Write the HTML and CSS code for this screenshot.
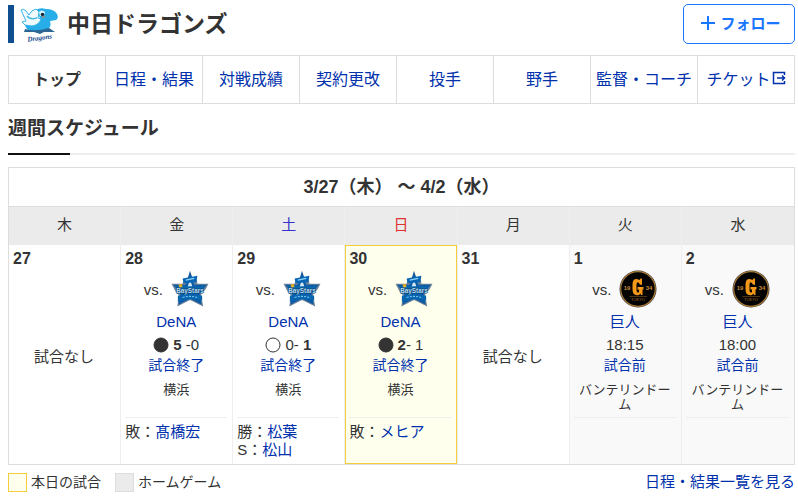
FILE: index.html
```html
<!DOCTYPE html>
<html lang="ja">
<head>
    <meta charset="UTF-8">
    <meta name="viewport" content="width=device-width, initial-scale=1.0">
    <title>中日ドラゴンズ</title>
    <link rel="stylesheet" href="styles.css">
</head>
<body>
    <!-- shared team logos -->
    <svg class="symbols" aria-hidden="true">
        <symbol id="baystars" viewBox="0 0 36 36">
            <path d="M18 0.5 L21 9 L24.5 9 L25 13 L35.5 13 L33 18 L28.5 22 L29 26 L30.5 34.5 L18 28.5 L6 34.5 L7.5 24 L4 20 L0.5 13 L11 13 L12 8.500 L15.500 8.500Z" fill="#70849a"/>
            <path d="M18 2 L22 14 L34 14 L27 22 L29 33 L18 27 L7 33 L9 22 L2 14 L14 14Z" fill="#0a5aa5"/>
            <path d="M18 9 L22 21 H14Z" fill="#d5eaf5"/>
            <path d="M11 8 L25 5.500 L24 11.500 L12 12.500Z" fill="#0866b5"/>
            <path d="M14 9.500 L22 8" stroke="#8ed5f5" stroke-width="1.200"/>
            <path d="M4 15.500 H32 L30 22 H6Z" fill="#0b67ae"/>
            <text x="18" y="21.500" class="logo-stars">BayStars</text>
            <path d="M6.500 24.500 Q18 21.500 29.500 24.500 V29 Q18 26 6.500 30Z" fill="#0866b0"/>
            <path d="M11 26 Q18 24 25 26" stroke="#77c5ed" stroke-width="1" fill="none" stroke-dasharray="2 1"/>
            <path d="M7 14 L10 13 L11 16 L8 16.500Z" fill="#e5ae24"/>
        </symbol>
        <symbol id="giants" viewBox="0 0 38 38">
            <circle cx="19" cy="19" r="18.500" fill="#30343a"/>
            <circle cx="19" cy="19" r="17.300" fill="#030303" stroke="#a77a38" stroke-width="1.200"/>
            <path d="M23 15 V8.500 H21.500 L20.500 10 Q14 7 13.500 14 V19 Q13.500 26.500 20 25 L21.500 23.500 L22 25 H23.500 V19.500 H24.500 V17 H18.500 V19.500 H20 V22 Q17.500 24 17.500 19 V14.500 Q18 10 21 14.500Z" fill="#f39818"/>
            <text x="8" y="20" class="logo-year">19</text>
            <text x="30" y="20" class="logo-year">34</text>
            <path d="M10.500 26.500 H28" stroke="#6b4b1d" stroke-width="0.700"/>
            <text x="19" y="31" class="logo-city">TOKYO</text>
        </symbol>
    </svg>

    <header class="team-header">
        <div class="team-title">
            <svg class="team-logo" viewBox="0 0 40 38" aria-hidden="true">
                <path d="M16 5 Q20 2 26 4 Q34 4 37 9 Q39 13 36 15 L30 16 Q32 22 27 25 L22 27 H12 Q6 25 5 20 L11 19 Q19 18 20 13Z" fill="#27aee8"/>
                <path d="M1 5 Q4 3 6 6 L9 10 Q11 5 16 4 L19 7 L18 13 L21 14 Q19 20 12 21 L5 20 L2 17 L6 16Z" fill="#effaff" stroke="#3cb4e7" stroke-width="1"/>
                <path d="M7 11 Q10 15 17 13" fill="none" stroke="#4ab9e6" stroke-width="1.500"/>
                <path d="M19 7 Q22 4 25 7 L24 11 H20Z" fill="#d8f5ff"/>
                <circle cx="22.500" cy="9.500" r="1.800" fill="#142b3d"/>
                <path d="M22 12 L25 12" stroke="#df7b3b"/>
                <path d="M5 24 Q15 27 29 23 L35 27 H24 L20 29 L14 27 H4Z" fill="#2d6692"/>
                <text x="20" y="35" class="logo-dragons" transform="rotate(-8 20 35)">Dragons</text>
            </svg>
            <h1>中日ドラゴンズ</h1>
        </div>
        <button type="button" class="follow-btn">
            <svg class="plus-icon" viewBox="0 0 14 14" aria-hidden="true"><path d="M7 0V14M0 7H14"/></svg>
            フォロー
        </button>
    </header>

    <nav class="tabs">
        <a href="#" class="active">トップ</a>
        <a href="#">日程・結果</a>
        <a href="#">対戦成績</a>
        <a href="#">契約更改</a>
        <a href="#">投手</a>
        <a href="#">野手</a>
        <a href="#">監督・コーチ</a>
        <a href="#">チケット<svg class="external-icon" viewBox="0 0 14 14" aria-hidden="true"><path d="M12.500 4V1.500H1.500V12.500H12.500V10M5 7H13M10 4.500L12.500 7L10 9.500"/></svg></a>
    </nav>

    <h2 class="section-title">週間スケジュール</h2>

    <table class="schedule">
        <thead>
            <tr>
                <th colspan="7" class="period">3/27（木） 〜 4/2（水）</th>
            </tr>
            <tr class="weekdays">
                <th>木</th>
                <th>金</th>
                <th class="sat">土</th>
                <th class="sun">日</th>
                <th>月</th>
                <th>火</th>
                <th>水</th>
            </tr>
        </thead>
        <tbody>
            <tr>
                <td>
                    <p class="date">27</p>
                    <p class="no-game">試合なし</p>
                </td>
                <td>
                    <p class="date">28</p>
                    <div class="versus">vs.<svg class="opponent-logo"><use href="#baystars"/></svg></div>
                    <a href="#" class="opponent">DeNA</a>
                    <p class="score"><svg class="mark lose" viewBox="0 0 16 16"><circle cx="8" cy="8" r="7"/></svg><span><b>5</b> -0</span></p>
                    <a href="#" class="status">試合終了</a>
                    <p class="stadium">横浜</p>
                    <div class="pitchers">
                        <p>敗：<a href="#">髙橋宏</a></p>
                    </div>
                </td>
                <td>
                    <p class="date">29</p>
                    <div class="versus">vs.<svg class="opponent-logo"><use href="#baystars"/></svg></div>
                    <a href="#" class="opponent">DeNA</a>
                    <p class="score"><svg class="mark" viewBox="0 0 16 16"><circle cx="8" cy="8" r="7"/></svg><span>0- <b>1</b></span></p>
                    <a href="#" class="status">試合終了</a>
                    <p class="stadium">横浜</p>
                    <div class="pitchers">
                        <p>勝：<a href="#">松葉</a></p>
                        <p>S：<a href="#">松山</a></p>
                    </div>
                </td>
                <td class="today">
                    <p class="date">30</p>
                    <div class="versus">vs.<svg class="opponent-logo"><use href="#baystars"/></svg></div>
                    <a href="#" class="opponent">DeNA</a>
                    <p class="score"><svg class="mark lose" viewBox="0 0 16 16"><circle cx="8" cy="8" r="7"/></svg><span><b>2</b>- 1</span></p>
                    <a href="#" class="status">試合終了</a>
                    <p class="stadium">横浜</p>
                    <div class="pitchers">
                        <p>敗：<a href="#">メヒア</a></p>
                    </div>
                </td>
                <td>
                    <p class="date">31</p>
                    <p class="no-game">試合なし</p>
                </td>
                <td class="home">
                    <p class="date">1</p>
                    <div class="versus">vs.<svg class="opponent-logo"><use href="#giants"/></svg></div>
                    <a href="#" class="opponent">巨人</a>
                    <p class="score">18:15</p>
                    <a href="#" class="status">試合前</a>
                    <p class="stadium">バンテリンドーム</p>
                    <div class="pitchers"></div>
                </td>
                <td class="home">
                    <p class="date">2</p>
                    <div class="versus">vs.<svg class="opponent-logo"><use href="#giants"/></svg></div>
                    <a href="#" class="opponent">巨人</a>
                    <p class="score">18:00</p>
                    <a href="#" class="status">試合前</a>
                    <p class="stadium">バンテリンドーム</p>
                    <div class="pitchers"></div>
                </td>
            </tr>
        </tbody>
    </table>

    <footer class="schedule-footer">
        <ul class="legend">
            <li class="legend-today">本日の試合</li>
            <li class="legend-home">ホームゲーム</li>
        </ul>
        <a href="#">日程・結果一覧を見る</a>
    </footer>
</body>
</html>
```

FILE: styles.css
```css
* {
    margin: 0;
    padding: 0;
    box-sizing: border-box;
}

body {
    padding: 4px 3px 4px 8px;
    background: #fff;
    color: #333;
    font-family: "Liberation Sans", "Noto Sans CJK JP", sans-serif;
    font-size: 15px;
}

a {
    color: #0031ad;
    text-decoration: none;
}

a:hover {
    text-decoration: underline;
}

.symbols {
    display: none;
}

/* header */
.team-header {
    display: flex;
    align-items: center;
    justify-content: space-between;
}

.team-title {
    display: flex;
    align-items: center;
    gap: 7px;
    height: 38px;
    padding-left: 6px;
    border-left: 6px solid #0f4f8f;
}

.team-logo {
    width: 40px;
    height: 38px;
}

.team-title h1 {
    font-size: 23px;
    line-height: 32px;
}

.follow-btn {
    display: flex;
    align-items: center;
    justify-content: center;
    gap: 5px;
    width: 112px;
    height: 40px;
    padding: 0 0 3px 4px;
    border: 1px solid #1a75ff;
    border-radius: 5px;
    background: #fff;
    color: #1a75ff;
    font-family: inherit;
    font-size: 15px;
    font-weight: bold;
    cursor: pointer;
}

.plus-icon {
    width: 14px;
    height: 14px;
    fill: none;
    stroke: #1a75ff;
    stroke-width: 2;
}

/* tabs */
.tabs {
    display: grid;
    grid-template-columns: repeat(6, 97fr) 107fr 96fr;
    margin-top: 11px;
    border: 1px solid #ddd;
}

.tabs a {
    display: flex;
    align-items: center;
    justify-content: center;
    gap: 1px;
    height: 47px;
    padding-bottom: 3px;
    border-right: 1px solid #ddd;
    font-size: 16px;
    white-space: nowrap;
}

.tabs a:last-child {
    border-right: none;
}

.tabs .active {
    color: #333;
    font-weight: bold;
}

.external-icon {
    width: 14px;
    height: 14px;
    fill: none;
    stroke: #0031ad;
    stroke-width: 1.5;
}

.section-title {
    margin: 11px 0 12px;
    padding-bottom: 10px;
    border-bottom: 2px solid #eee;
    border-image: linear-gradient(to right, #111 64px, #eee 64px) 2;
    font-size: 19px;
    line-height: 28px;
}

/* weekly schedule */
.schedule {
    width: 100%;
    table-layout: fixed;
    border: 1px solid #ddd;
    border-collapse: separate;
    border-spacing: 0;
    text-align: center;
}

.period {
    height: 39px;
    padding-bottom: 4px;
    border-bottom: 1px solid #ddd;
    font-size: 18px;
}

.weekdays th {
    height: 38px;
    padding-bottom: 5px;
    border-right: 1px solid #f0f0f0;
    background: #ebebeb;
    font-size: 15px;
    font-weight: normal;
}

.weekdays .sat {
    color: #33c;
}

.weekdays .sun {
    color: #d33;
}

.schedule td {
    padding: 5px 5px 5px 4px;
    border-right: 1px solid #eee;
    vertical-align: top;
}

.schedule th:last-child,
.schedule td:last-child {
    border-right: none;
}

.schedule .today {
    background: #ffe;
    box-shadow: inset 0 0 0 1px #f5ce3e;
}

.schedule .home {
    background: #f9f9f9;
}

.date {
    font-size: 16px;
    font-weight: bold;
    line-height: 18px;
    text-align: left;
}

.no-game {
    padding-top: 79px;
    line-height: 20px;
}

.versus {
    display: flex;
    align-items: center;
    justify-content: center;
    gap: 8px;
    margin-top: 2px;
}

.opponent-logo {
    width: 38px;
    height: 38px;
}

.opponent {
    display: block;
    margin-top: 4px;
    line-height: 20px;
}

.score {
    display: flex;
    align-items: center;
    justify-content: center;
    gap: 4px;
    margin-top: 4px;
    line-height: 18px;
}

.mark {
    width: 16px;
    height: 16px;
    fill: #fff;
    stroke: #333;
}

.mark.lose {
    fill: #333;
}

.status {
    display: block;
    margin-top: 1px;
    font-size: 14px;
    line-height: 20px;
}

.stadium {
    min-height: 35px;
    margin-top: 7px;
    font-size: 13px;
    line-height: 15px;
}

.pitchers {
    padding-top: 5px;
    border-top: 1px solid #eee;
    line-height: 18px;
    text-align: left;
}

.schedule-footer {
    display: flex;
    justify-content: space-between;
    margin-top: 7px;
    line-height: 20px;
}

.legend {
    display: flex;
    gap: 14px;
    font-size: 14px;
    list-style: none;
}

.legend li {
    display: flex;
    align-items: center;
    gap: 4px;
}

.legend li::before {
    content: "";
    width: 17px;
    height: 17px;
    border: 1px solid #ddd;
    background: #ebebeb;
}

.legend .legend-today::before {
    border-color: #f5ce3e;
    background: #ffe;
}

/* lettering inside the logos */
.logo-stars {
    fill: #b9dbee;
    stroke: #064478;
    stroke-width: 1px;
    paint-order: stroke;
    font-size: 6px;
    font-weight: bold;
    text-anchor: middle;
}

.logo-year {
    fill: #c98b38;
    font-size: 6px;
    font-weight: bold;
    text-anchor: middle;
}

.logo-city {
    fill: #a96e25;
    font-size: 4px;
    text-anchor: middle;
}

.logo-dragons {
    fill: #174a8c;
    font-family: "Liberation Serif", serif;
    font-size: 7px;
    font-style: italic;
    font-weight: bold;
    text-anchor: middle;
}
```
